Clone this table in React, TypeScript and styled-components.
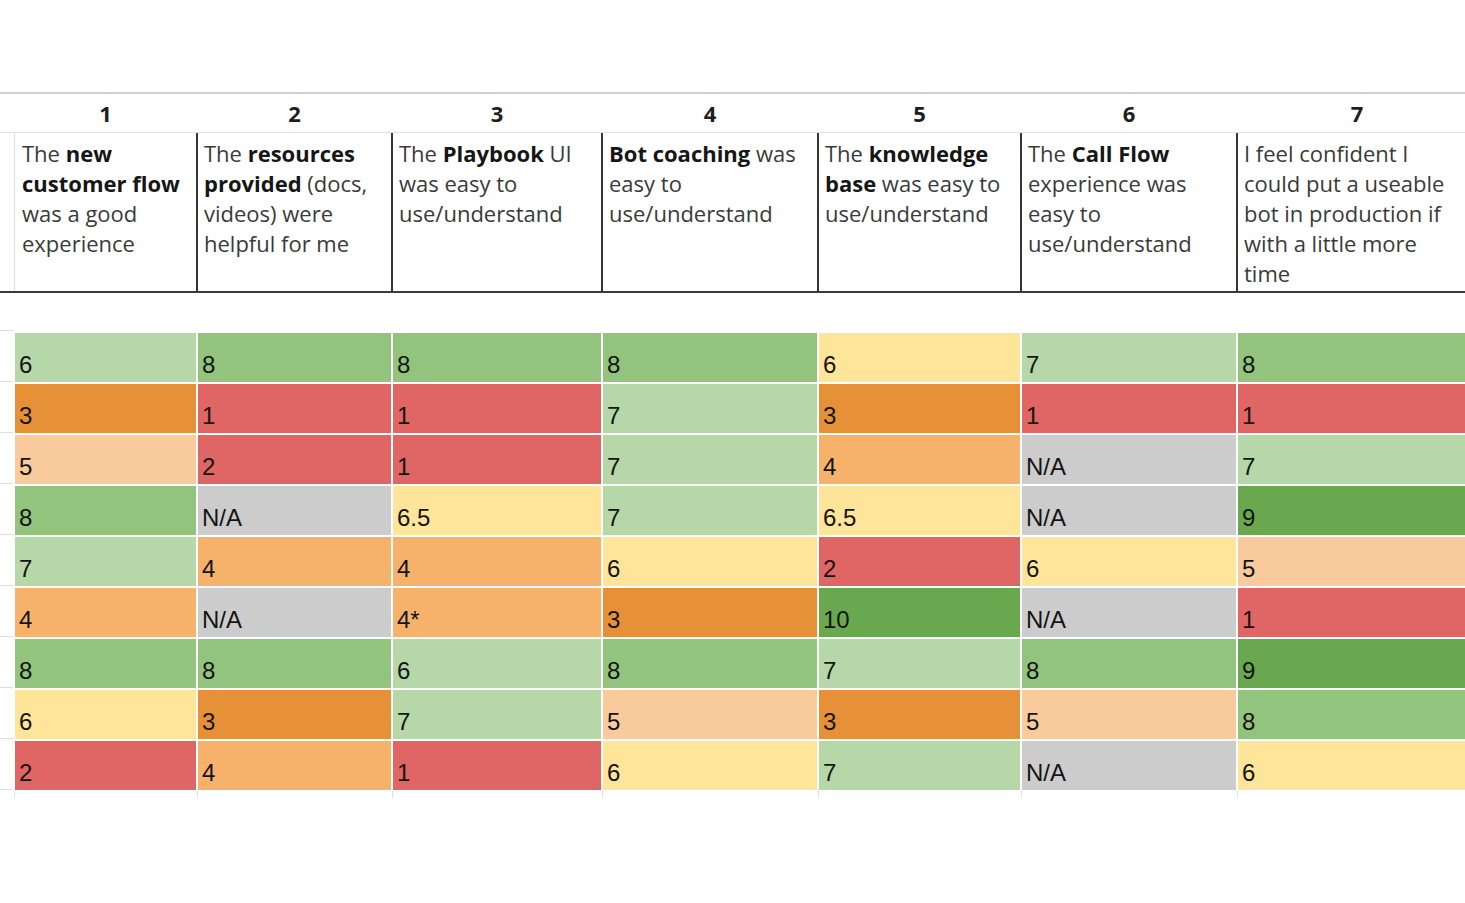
import React from 'react'
import styled, { createGlobalStyle } from 'styled-components'

const GlobalStyle = createGlobalStyle`
  html, body {
    margin: 0;
    padding: 0;
    background: #ffffff;
    overflow: hidden;
  }
`

const COLS = '14px 183px 195px 210px 216px 203px 216px 240px'

const fills = {
  lg: '#b6d7a8',
  g: '#93c47d',
  dg: '#6aa84f',
  y: '#ffe599',
  lo: '#f9cb9c',
  o: '#f6b26b',
  do: '#e69138',
  r: '#e06666',
  na: '#cccccc',
} as const

type Fill = keyof typeof fills

const Sheet = styled.div`
  width: 1465px;
  height: 903px;
  padding-top: 92px;
  box-sizing: border-box;
  overflow: hidden;
`

const Grid = styled.div`
  display: grid;
  grid-template-columns: ${COLS};
  width: 1477px;
`

const NumberRow = styled(Grid)`
  height: 40px;
  border-top: 2px solid #c9d2e1;
  box-sizing: border-box;
`

const NumberCell = styled.div`
  display: flex;
  align-items: center;
  justify-content: center;
  font-family: 'Open Sans', 'Liberation Sans', sans-serif;
  font-weight: 700;
  font-size: 22px;
  line-height: 30px;
  color: #1e1e1e;
`

const QuestionRow = styled(Grid)`
  height: 161px;
  box-sizing: border-box;
  border-top: 1px solid #e2e2e2;
  border-bottom: 2px solid #3a3a3a;
`

const Stub = styled.div<{ $line?: boolean }>`
  border-bottom: ${(p) => (p.$line ? '1px solid #dedede' : 'none')};
`

const Question = styled.div<{ $first?: boolean }>`
  box-sizing: border-box;
  margin-left: ${(p) => (p.$first ? '0' : '-1px')};
  padding: 5px 0 0 ${(p) => (p.$first ? '7px' : '6px')};
  border-left: ${(p) => (p.$first ? '1px solid #dcdcdc' : '2px solid #353535')};
  font-family: 'Open Sans', 'Liberation Sans', sans-serif;
  font-size: 22px;
  line-height: 30px;
  color: #3a3a3a;
  white-space: nowrap;
  overflow: hidden;
  b {
    font-weight: 700;
    color: #161616;
  }
`

const Spacer = styled(Grid)`
  height: 38px;
`

const DataRow = styled(Grid)`
  height: 51px;
`

const Score = styled.div<{ $fill: Fill }>`
  display: flex;
  align-items: flex-end;
  box-sizing: border-box;
  margin-left: -1px;
  padding: 0 0 4px 4px;
  background: ${(p) => fills[p.$fill]};
  background-clip: padding-box;
  border-top: 2px solid #ffffff;
  border-left: 2px solid #ffffff;
  font-family: 'Liberation Sans', Arial, sans-serif;
  font-size: 24px;
  line-height: 27px;
  color: #141414;
  white-space: nowrap;
`

const TickRow = styled(Grid)`
  height: 8px;
`

const Tick = styled.div`
  border-left: 1px solid #e0e0e0;
`

const questions: React.ReactNode[] = [
  <>The <b>new</b><br /><b>customer flow</b><br />was a good<br />experience</>,
  <>The <b>resources</b><br /><b>provided</b> (docs,<br />videos) were<br />helpful for me</>,
  <>The <b>Playbook</b> UI<br />was easy to<br />use/understand</>,
  <><b>Bot coaching</b> was<br />easy to<br />use/understand</>,
  <>The <b>knowledge</b><br /><b>base</b> was easy to<br />use/understand</>,
  <>The <b>Call Flow</b><br />experience was<br />easy to<br />use/understand</>,
  <>I feel confident I<br />could put a useable<br />bot in production if<br />with a little more<br />time</>,
]

const rows: [string, Fill][][] = [
  [['6', 'lg'], ['8', 'g'], ['8', 'g'], ['8', 'g'], ['6', 'y'], ['7', 'lg'], ['8', 'g']],
  [['3', 'do'], ['1', 'r'], ['1', 'r'], ['7', 'lg'], ['3', 'do'], ['1', 'r'], ['1', 'r']],
  [['5', 'lo'], ['2', 'r'], ['1', 'r'], ['7', 'lg'], ['4', 'o'], ['N/A', 'na'], ['7', 'lg']],
  [['8', 'g'], ['N/A', 'na'], ['6.5', 'y'], ['7', 'lg'], ['6.5', 'y'], ['N/A', 'na'], ['9', 'dg']],
  [['7', 'lg'], ['4', 'o'], ['4', 'o'], ['6', 'y'], ['2', 'r'], ['6', 'y'], ['5', 'lo']],
  [['4', 'o'], ['N/A', 'na'], ['4*', 'o'], ['3', 'do'], ['10', 'dg'], ['N/A', 'na'], ['1', 'r']],
  [['8', 'g'], ['8', 'g'], ['6', 'lg'], ['8', 'g'], ['7', 'lg'], ['8', 'g'], ['9', 'dg']],
  [['6', 'y'], ['3', 'do'], ['7', 'lg'], ['5', 'lo'], ['3', 'do'], ['5', 'lo'], ['8', 'g']],
  [['2', 'r'], ['4', 'o'], ['1', 'r'], ['6', 'y'], ['7', 'lg'], ['N/A', 'na'], ['6', 'y']],
]

export default function App() {
  return (
    <Sheet>
      <GlobalStyle />
      <NumberRow>
        <Stub />
        {questions.map((_, i) => (
          <NumberCell key={i}>{i + 1}</NumberCell>
        ))}
      </NumberRow>

      <QuestionRow>
        <Stub />
        {questions.map((q, i) => (
          <Question key={i} $first={i === 0}>{q}</Question>
        ))}
      </QuestionRow>

      <Spacer>
        <Stub $line />
      </Spacer>

      {rows.map((row, r) => (
        <DataRow key={r}>
          <Stub $line />
          {row.map(([value, fill], c) => (
            <Score key={c} $fill={fill}>{value}</Score>
          ))}
        </DataRow>
      ))}

      <TickRow>
        <Stub />
        {questions.map((_, i) => (
          <Tick key={i} />
        ))}
      </TickRow>
    </Sheet>
  )
}
